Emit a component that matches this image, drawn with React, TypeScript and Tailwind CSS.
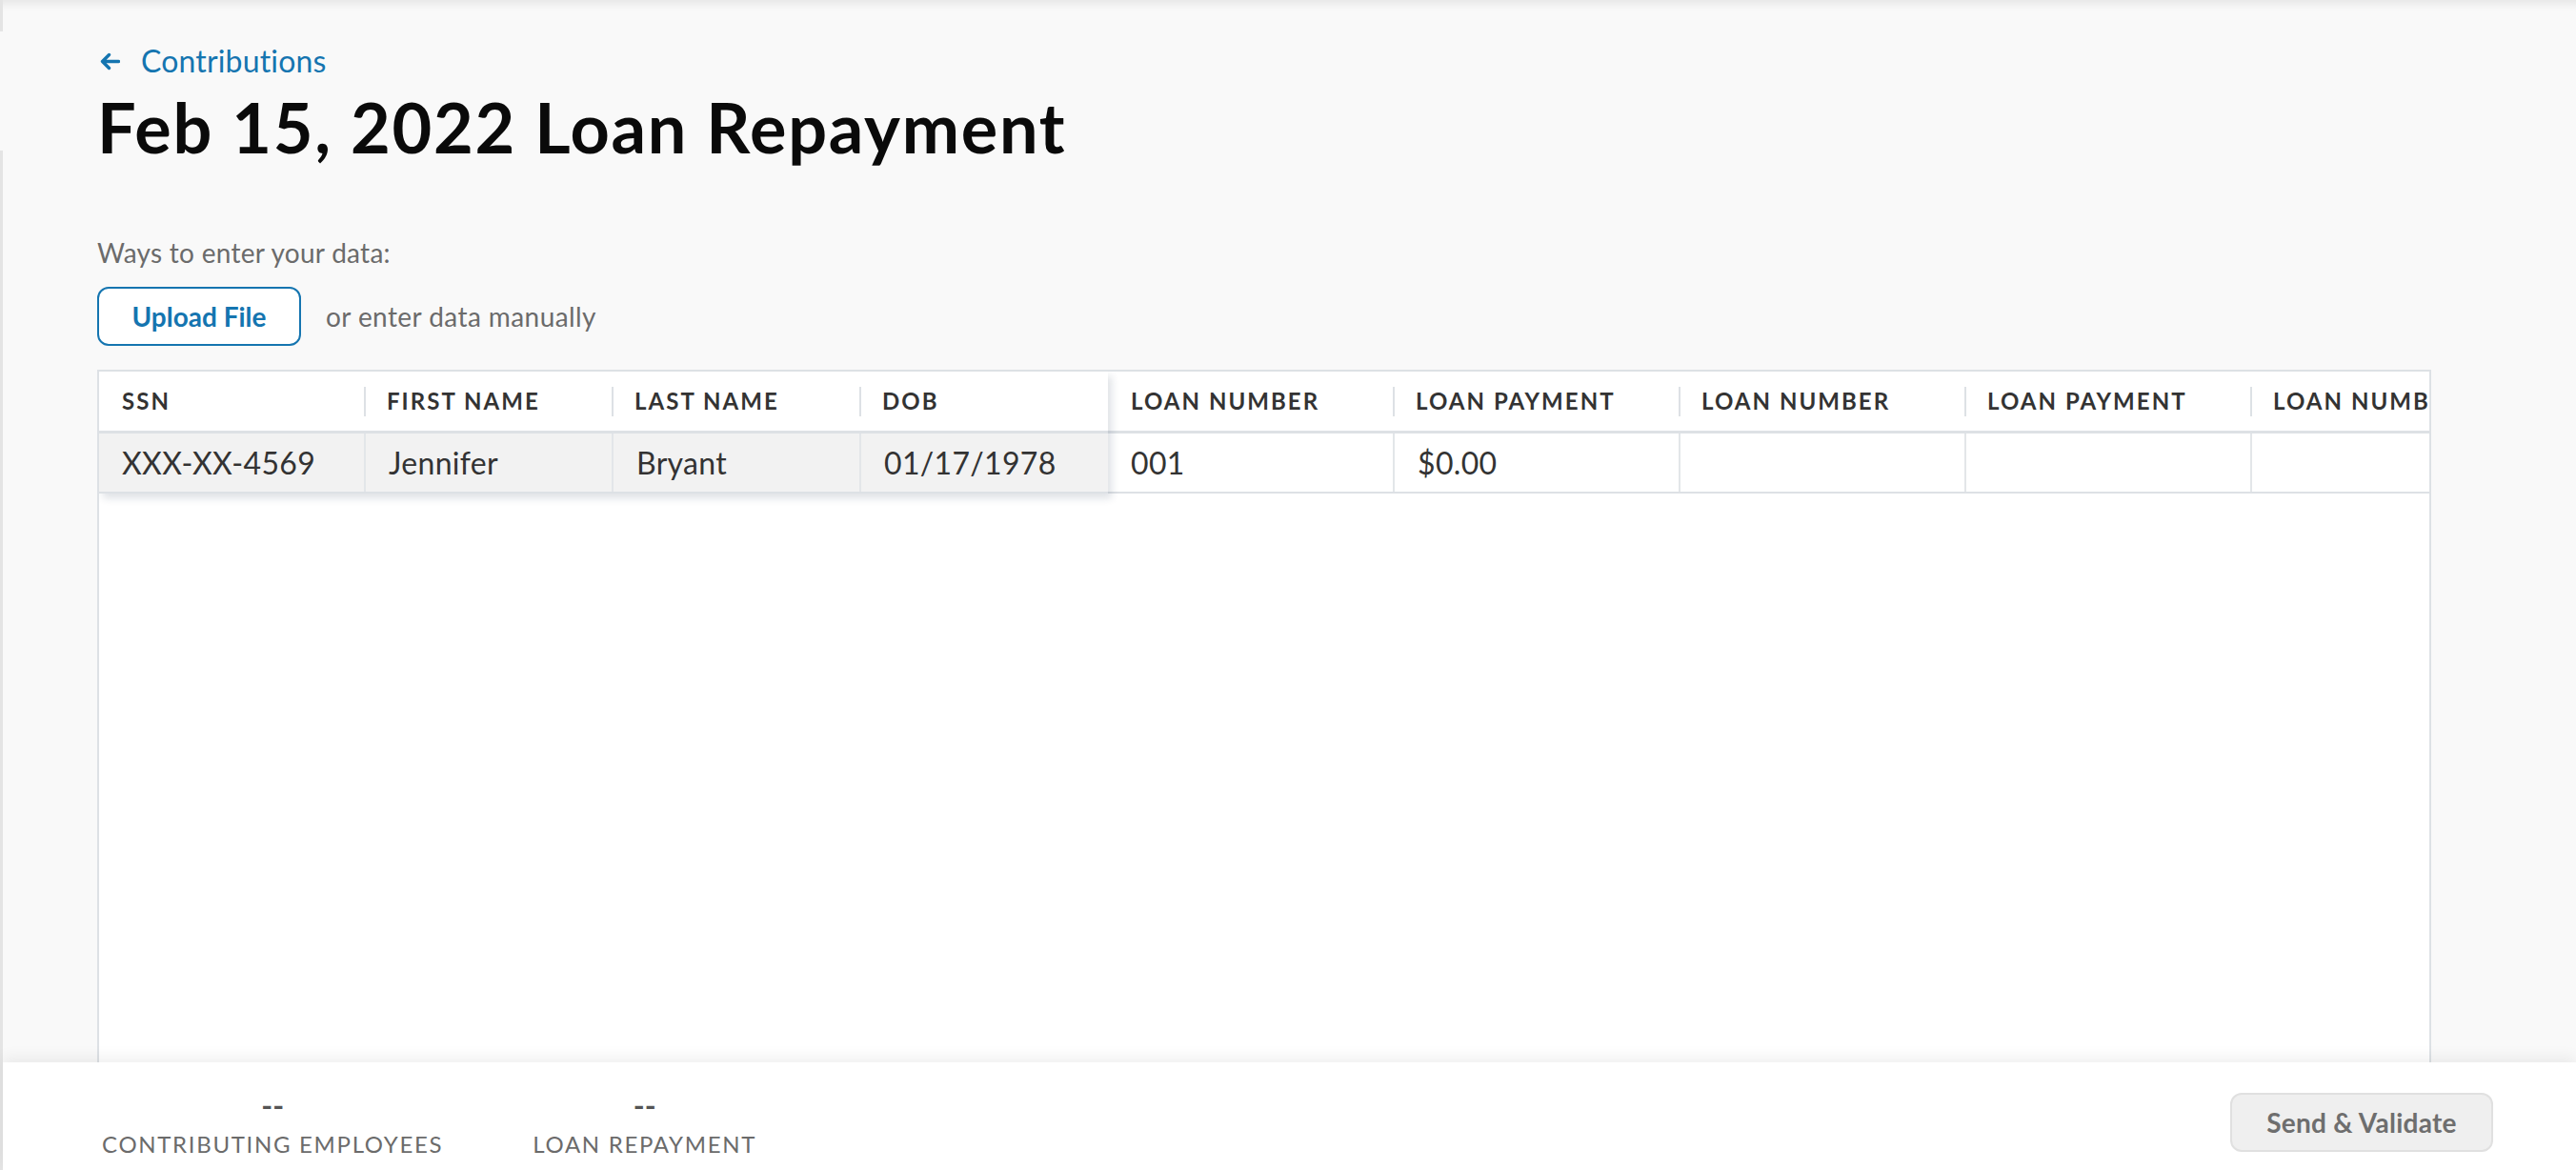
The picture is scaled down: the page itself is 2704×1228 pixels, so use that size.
import React from "react";

const pinned = [
  { label: "SSN", value: "XXX-XX-4569", w: "w-[278px]" },
  { label: "FIRST NAME", value: "Jennifer", w: "w-[260px]" },
  { label: "LAST NAME", value: "Bryant", w: "w-[260px]" },
  { label: "DOB", value: "01/17/1978", w: "w-[261px]" },
];

const rest = [
  { label: "LOAN NUMBER", value: "001", w: "w-[299px]" },
  { label: "LOAN PAYMENT", value: "$0.00", w: "w-[300px]" },
  { label: "LOAN NUMBER", value: "", w: "w-[300px]" },
  { label: "LOAN PAYMENT", value: "", w: "w-[300px]" },
  { label: "LOAN NUMBER", value: "", w: "w-[300px]" },
];

function HeaderCell({ label, w, first }: { label: string; w: string; first: boolean }) {
  return (
    <div className={`${w} flex h-full shrink-0 items-center overflow-hidden`}>
      {first ? (
        <div className="w-[24px] shrink-0" />
      ) : (
        <>
          <div className="h-[31px] w-[2px] shrink-0 bg-[#dde1e5]" />
          <div className="w-[22px] shrink-0" />
        </>
      )}
      <span className="whitespace-nowrap text-[24px] font-bold tracking-[0.085em] text-[#333]">{label}</span>
    </div>
  );
}

function BodyCell({ value, w, first, bg }: { value: string; w: string; first: boolean; bg: string }) {
  return (
    <div
      className={`${w} ${bg} ${first ? "" : "border-l-2 border-[#e3e6e9]"} flex h-full shrink-0 items-center pl-[24px] whitespace-nowrap text-[32px] tracking-[0.01em] text-[#333]`}
    >
      {value}
    </div>
  );
}

export default function App() {
  return (
    <div className="flex h-[1228px] w-[2704px] overflow-hidden bg-[#f9f9f9] font-['Lato',sans-serif] text-[#333]">
      {/* left edge strip */}
      <div className="flex w-[3px] shrink-0 flex-col">
        <div className="h-[33px] bg-[#e4e4e4]" />
        <div className="h-[125px]" />
        <div className="flex-1 bg-[#e4e4e4]" />
      </div>

      <div className="flex min-w-0 flex-1 flex-col">
        {/* main content */}
        <div className="flex min-h-0 flex-1 flex-col pl-[99px] pr-[152px] pt-[42px] shadow-[inset_0_12px_10px_-8px_rgba(0,0,0,0.08)]">
          <div className="flex h-[44px] items-center text-[32px] leading-[44px] text-[#1575b0]">
            <svg width="21" height="19" viewBox="0 0 21 19" fill="none" className="ml-[3px] shrink-0">
              <path d="M19.5 9.5H2.5M9.5 2.5L2.5 9.5L9.5 16.5" stroke="#1575b0" strokeWidth="3.4" strokeLinecap="round" strokeLinejoin="round" />
            </svg>
            <span className="ml-[22px] tracking-[0.005em]">Contributions</span>
          </div>
          <h1 className="mt-[4px] text-[72px] font-bold leading-[86px] tracking-[0.024em] text-[#0a0a0a]">
            Feb 15, 2022 Loan Repayment
          </h1>

          <div className="mt-[71px] text-[28px] leading-[36px] tracking-[0.01em] text-[#6b6b6b]">Ways to enter your data:</div>
          <div className="mt-[18px] flex items-center">
            <button className="flex h-[62px] w-[214px] items-center justify-center rounded-[12px] border-2 border-[#1575b0] bg-white text-[28px] font-bold text-[#1575b0]">
              Upload File
            </button>
            <span className="ml-[26px] text-[28px] tracking-[0.015em] text-[#6b6b6b]">or enter data manually</span>
          </div>

          {/* table */}
          <div className="mt-[25px] flex min-h-0 flex-1 overflow-hidden border-x-2 border-t-2 border-[#dde1e5] bg-white">
            <div className="flex items-start">
              <div className="relative z-10 flex flex-col shadow-[4px_5px_8px_rgba(30,50,80,0.14)]">
                <div className="flex h-[65px] border-b-[3px] border-[#dde1e5] bg-white">
                  {pinned.map((c, i) => (
                    <HeaderCell key={i} label={c.label} w={c.w} first={i === 0} />
                  ))}
                </div>
                <div className="flex h-[63px] border-b-2 border-[#dde1e5]">
                  {pinned.map((c, i) => (
                    <BodyCell key={i} value={c.value} w={c.w} first={i === 0} bg="bg-[#f2f2f2]" />
                  ))}
                </div>
              </div>
              <div className="flex flex-col">
                <div className="flex h-[65px] border-b-[3px] border-[#dde1e5] bg-white">
                  {rest.map((c, i) => (
                    <HeaderCell key={i} label={c.label} w={c.w} first={i === 0} />
                  ))}
                </div>
                <div className="flex h-[63px] border-b-2 border-[#dde1e5]">
                  {rest.map((c, i) => (
                    <BodyCell key={i} value={c.value} w={c.w} first={i === 0} bg="bg-white" />
                  ))}
                </div>
              </div>
            </div>
          </div>
        </div>

        {/* footer */}
        <div className="relative z-20 flex h-[113px] shrink-0 items-start justify-between bg-white shadow-[0_-6px_14px_rgba(0,0,0,0.06)]">
          <div className="flex gap-[94px] pl-[104px] pt-[29px]">
            <div className="flex flex-col items-center">
              <div className="text-[32px] font-bold leading-[32px] text-[#555]">--</div>
              <div className="mt-[11px] text-[24px] leading-[28px] tracking-[0.07em] text-[#6b6b6b]">CONTRIBUTING EMPLOYEES</div>
            </div>
            <div className="flex flex-col items-center">
              <div className="text-[32px] font-bold leading-[32px] text-[#555]">--</div>
              <div className="mt-[11px] text-[24px] leading-[28px] tracking-[0.07em] text-[#6b6b6b]">LOAN REPAYMENT</div>
            </div>
          </div>
          <button className="mr-[87px] mt-[32px] flex h-[62px] w-[276px] items-center justify-center rounded-[12px] border-2 border-[#e0e0e0] bg-[#efefef] text-[28px] font-bold tracking-[0.01em] text-[#6e6e6e]">
            Send &amp; Validate
          </button>
        </div>
      </div>
    </div>
  );
}
